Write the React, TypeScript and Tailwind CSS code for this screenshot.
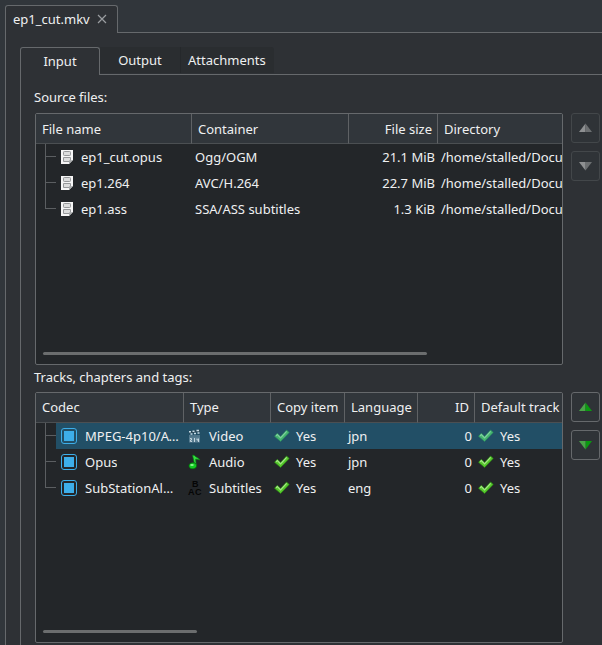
import React from "react";

type Source = { name: string; container: string; size: string; dir: string };
type Track = { codec: string; type: "Video" | "Audio" | "Subtitles"; lang: string; id: number };

const sources: Source[] = [
  { name: "ep1_cut.opus", container: "Ogg/OGM", size: "21.1 MiB", dir: "/home/stalled/Documents" },
  { name: "ep1.264", container: "AVC/H.264", size: "22.7 MiB", dir: "/home/stalled/Documents" },
  { name: "ep1.ass", container: "SSA/ASS subtitles", size: "1.3 KiB", dir: "/home/stalled/Documents" },
];

const tracks: Track[] = [
  { codec: "MPEG-4p10/AVC/H.264", type: "Video", lang: "jpn", id: 0 },
  { codec: "Opus", type: "Audio", lang: "jpn", id: 0 },
  { codec: "SubStationAlpha", type: "Subtitles", lang: "eng", id: 0 },
];

function FileIcon() {
  return (
    <svg width="16" height="16" viewBox="0 0 16 16" className="shrink-0" aria-hidden="true">
      <path d="M2 1h12v10l-4 4H2z" fill="#f6f6f6" />
      <path d="M14 11l-4 4v-3.500z" fill="#a9abad" />
      <rect x="4.500" y="2.500" width="7" height="4" rx="0.800" fill="#dcdddd" stroke="#96989a" />
      <path d="M4.500 8.500h7v2.500l-1.500 1.500H4.500z" fill="#dcdddd" stroke="#96989a" />
    </svg>
  );
}

function CheckIcon({ selected }: { selected: boolean }) {
  return (
    <svg width="16" height="16" viewBox="0 0 16 16" className="shrink-0" aria-hidden="true">
      <path
        d="M0.500 8.300L3.300 5.300L6.600 8.500L12.600 2L15.200 4.400L6.600 13.500z"
        fill={selected ? "#45b56f" : "#56c92c"}
        stroke={selected ? "#2b8a60" : "#2c8516"}
        strokeWidth="0.700"
      />
      <path d="M2 7.800l1.300-1.300 3.300 3.300L12.600 3.300" fill="none" stroke={selected ? "#7fcf9f" : "#a5e388"} strokeWidth="1.200" />
    </svg>
  );
}

function TypeIcon({ type }: { type: Track["type"] }) {
  if (type === "Video")
    return (
      <svg width="16" height="16" viewBox="0 0 16 16" className="shrink-0" aria-hidden="true">
        <path d="M2 3.500l11-2v2.500l-11 1.500z" fill="#2c4a5a" />
        <path d="M2 3.800h2M5.500 3.300h2M9.500 2.500h2.500M3.500 6h2M7 5.500h2M10.500 5h2" stroke="#c9dde7" strokeWidth="1.600" />
        <path d="M2 8h11" stroke="#7f9dad" strokeWidth="1" />
        <path d="M2 9h11v5.500H2z" fill="#587d91" />
        <path d="M3 10.500h1.500v1.500h-1v1.500h1.500M7.500 10v4M10 10.500v1.500h2M11.500 10.500v3.500" fill="none" stroke="#cfdfe7" strokeWidth="0.900" />
      </svg>
    );
  if (type === "Audio")
    return (
      <svg width="16" height="16" viewBox="0 0 16 16" className="shrink-0" aria-hidden="true">
        <path d="M5.500 1.200h1.600c1.200 1.800 4.900 2.600 5.900 4.800-1.700-.6-3-.8-4.300-.8L9.200 11H7.700z" fill="#35e040" stroke="#067a12" strokeWidth="0.700" />
        <ellipse cx="5.800" cy="11.800" rx="3.800" ry="3" transform="rotate(-12 5.800 11.800)" fill="#14ca22" stroke="#057010" strokeWidth="0.700" />
        <ellipse cx="5" cy="11" rx="1.800" ry="0.900" fill="#8df594" />
      </svg>
    );
  return (
    <svg width="16" height="16" viewBox="0 0 16 16" className="shrink-0" aria-hidden="true" fontFamily="Liberation Sans, sans-serif" fontWeight="700" fontSize="9" fill="#050505">
      <text x="5" y="7">B</text>
      <text x="1" y="15">A</text>
      <text x="8" y="15">C</text>
    </svg>
  );
}

function Branch({ last }: { last: boolean }) {
  return (
    <span className="relative h-full w-5 shrink-0 bg-[#232629]" aria-hidden="true">
      <span className={`absolute left-[9px] top-0 w-px bg-[#5b5e61] ${last ? "h-[13px]" : "h-full"}`} />
      <span className="absolute left-[9px] top-[12px] h-px w-[11px] bg-[#5b5e61]" />
    </span>
  );
}

function MoveButton({ dir, active }: { dir: "up" | "down"; active: boolean }) {
  const light = active ? "#4aa548" : "#8e9092";
  const dark = active ? "#0a9a10" : "#6c6f71";
  return (
    <button
      type="button"
      aria-label={dir === "up" ? "Move up" : "Move down"}
      disabled={!active}
      className={`flex h-[30px] w-[29px] items-center justify-center rounded-[3px] border bg-[#2f3337] ${active ? "border-[#66696c]" : "border-[#43474a]"}`}
    >
      <svg width="13" height="10" viewBox="0 0 13 10" className={dir === "up" ? "" : "rotate-180"} aria-hidden="true">
        <path d="M6.500 0.500v8.500H0z" fill={dir === "up" ? light : dark} />
        <path d="M6.500 0.500v8.500H13z" fill={dir === "up" ? dark : light} />
      </svg>
    </button>
  );
}

function Th({ children, right, last }: { children: string; right?: boolean; last?: boolean }) {
  return (
    <th
      scope="col"
      className={`h-[30px] overflow-hidden whitespace-nowrap border-b border-[#4b4f52] bg-[#31363b] py-0 pl-1.5 font-normal ${right ? "pr-[5px] text-right" : "text-left"} ${last ? "" : "border-r border-r-[#5f6265]"}`}
    >
      {children}
    </th>
  );
}

function Panel({ thumb, children }: { thumb: string; children: React.ReactNode }) {
  return (
    <div className="flex min-h-48 min-w-0 flex-1 flex-col justify-between overflow-hidden rounded-[2px] border border-[#66696c] bg-[#232629]">
      {children}
      <div className="mx-[7px] mb-[9px] h-[3px]">
        <div className={`h-full rounded-full bg-[#6b6d6e] ${thumb}`} />
      </div>
    </div>
  );
}

const cell = "h-[26px] p-0";
const textCell = "h-[26px] overflow-hidden whitespace-nowrap px-[3px] py-0";

export default function App() {
  return (
    <div className="flex min-h-screen flex-col overflow-hidden bg-[#31363b] pl-[5px] pt-[5px] font-['Noto_Sans',sans-serif] text-[13px] leading-[18px] text-[#eff0f1]">
      <div role="tablist" className="flex">
        <div className="z-10 -mb-px flex h-7 items-center gap-[7px] rounded-t-[3px] border border-b-0 border-[#66696c] bg-[#2e3135] pb-0.5 pl-[7px] pr-2.5">
          <button type="button" role="tab" aria-selected="true">ep1_cut.mkv</button>
          <button type="button" aria-label="Close tab">
            <svg width="10" height="10" viewBox="0 0 10 10" stroke="#9a9da0" strokeWidth="1.200" aria-hidden="true">
              <path d="M1 1l8 8M9 1L1 9" />
            </svg>
          </button>
        </div>
      </div>
      <main className="flex flex-1 flex-col border-l border-t border-[#66696c] bg-[#2e3135] pl-3.5 pt-3.5">
        <div role="tablist" className="flex">
          <button type="button" role="tab" aria-selected="true" className="z-10 -mb-px h-7 w-20 rounded-t-[3px] border border-b-0 border-[#66696c] bg-[#2e3135] pb-0.5">
            Input
          </button>
          <button type="button" role="tab" aria-selected="false" className="h-[26px] w-20 bg-[#2a2d30]">
            Output
          </button>
          <button type="button" role="tab" aria-selected="false" className="h-[26px] rounded-tr-[3px] border-l border-[#25282b] bg-[#2a2d30] pl-[7px] pr-2">
            Attachments
          </button>
        </div>
        <div role="tabpanel" className="flex flex-1 flex-col border-l border-t border-[#66696c] pb-0.5 pl-3.5 pr-0.5">
          <h2 className="-ml-px flex h-[38px] items-center pt-1.5">Source files:</h2>
          <section className="flex flex-1 gap-2">
            <Panel thumb="w-3/4">
              <table className="w-full table-fixed border-separate border-spacing-0">
                <colgroup>
                  <col className="w-[156px]" />
                  <col className="w-[157px]" />
                  <col className="w-[89px]" />
                  <col />
                </colgroup>
                <thead>
                  <tr>
                    <Th>File name</Th>
                    <Th>Container</Th>
                    <Th right>File size</Th>
                    <Th last>Directory</Th>
                  </tr>
                </thead>
                <tbody>
                  {sources.map((s, i) => (
                    <tr key={s.name}>
                      <td className={cell}>
                        <div className="flex h-[26px] items-center">
                          <Branch last={i === sources.length - 1} />
                          <span className="flex items-center gap-1.5 pl-[3px]">
                            <FileIcon />
                            {s.name}
                          </span>
                        </div>
                      </td>
                      <td className={textCell}>{s.container}</td>
                      <td className={`${textCell} text-right`}>{s.size}</td>
                      <td className={textCell}>{s.dir}</td>
                    </tr>
                  ))}
                </tbody>
              </table>
            </Panel>
            <div className="flex flex-col gap-2">
              <MoveButton dir="up" active={false} />
              <MoveButton dir="down" active={false} />
            </div>
          </section>
          <h2 className="-ml-px flex h-[27px] items-center pb-0.5">Tracks, chapters and tags:</h2>
          <section className="flex flex-1 gap-2">
            <Panel thumb="w-[30%]">
              <table className="w-full table-fixed border-separate border-spacing-0">
                <colgroup>
                  <col className="w-[148px]" />
                  <col className="w-[87px]" />
                  <col className="w-[74px]" />
                  <col className="w-[73px]" />
                  <col className="w-[57px]" />
                  <col />
                </colgroup>
                <thead>
                  <tr>
                    <Th>Codec</Th>
                    <Th>Type</Th>
                    <Th>Copy item</Th>
                    <Th>Language</Th>
                    <Th right>ID</Th>
                    <Th last>Default track</Th>
                  </tr>
                </thead>
                <tbody>
                  {tracks.map((t, i) => (
                    <tr key={t.codec} aria-selected={i === 0} className={i === 0 ? "bg-[#224f66]" : ""}>
                      <td className={cell}>
                        <div className="flex h-[26px] items-center">
                          <Branch last={i === tracks.length - 1} />
                          <label className="flex min-w-0 flex-1 items-center gap-2 pl-[5px] pr-1">
                            <input
                              type="checkbox"
                              defaultChecked
                              className="size-4 shrink-0 appearance-none rounded-[3px] border border-[#3daee9] bg-clip-content p-0.5 checked:bg-[#3daee9]"
                            />
                            <span className="truncate">{t.codec}</span>
                          </label>
                        </div>
                      </td>
                      <td className={textCell}>
                        <span className="flex items-center gap-1.5">
                          <TypeIcon type={t.type} />
                          {t.type}
                        </span>
                      </td>
                      <td className={textCell}>
                        <span className="flex items-center gap-1.5">
                          <CheckIcon selected={i === 0} />
                          Yes
                        </span>
                      </td>
                      <td className={textCell}>{t.lang}</td>
                      <td className={`${textCell} text-right`}>{t.id}</td>
                      <td className={textCell}>
                        <span className="flex items-center gap-1.5">
                          <CheckIcon selected={i === 0} />
                          Yes
                        </span>
                      </td>
                    </tr>
                  ))}
                </tbody>
              </table>
            </Panel>
            <div className="flex flex-col gap-2">
              <MoveButton dir="up" active />
              <MoveButton dir="down" active />
            </div>
          </section>
        </div>
      </main>
    </div>
  );
}
